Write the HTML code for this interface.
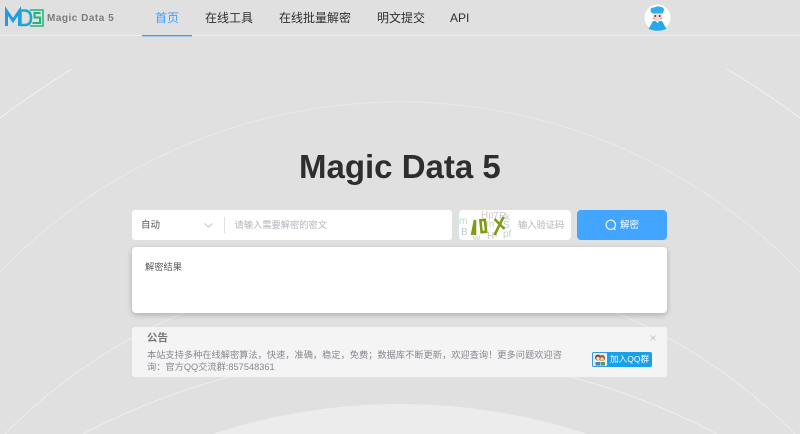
<!DOCTYPE html>
<html lang="zh">
<head>
<meta charset="utf-8">
<title>Magic Data 5</title>
<style>
html,body{margin:0;padding:0;width:800px;height:434px;overflow:hidden}
body{background:#e0e0e0;position:relative;font-family:"Liberation Sans","Noto Sans CJK SC",sans-serif}
#w{position:absolute;left:0;top:0;width:800px;height:434px;overflow:hidden;filter:blur(.3px)}
.a{position:absolute;white-space:nowrap}
.box{position:absolute;background:#fff;border-radius:4px}
.nav{top:10px;font-size:12px;line-height:16px;color:#2f2f2f}
</style>
</head>
<body>
<div id="w">
<svg class="a" style="left:0;top:0" width="800" height="434" viewBox="0 0 800 434">
<path d="M212 434A604 604 0 0 1 588 434Z" fill="#ececec"/>
<g fill="none" stroke-width="1">
<path d="M0 272A555.500 555.500 0 0 1 800 272" stroke="#e9e9e9"/>
<path d="M5 434A555 555 0 0 1 795 434" stroke="#ececec"/>
<path d="M83 434A677 677 0 0 1 717 434" stroke="#eeeeee"/>
<path d="M0 118Q35 92 72 69M800 118Q765 92 727 69" stroke="#f3f3f3"/>
</g>
<path d="M0 35.500H800" stroke="#ececec" stroke-width="1"/>
<rect x="142" y="35" width="50" height="1.400" fill="#409eff"/>
<g fill="none" stroke-linejoin="miter">
<path d="M6.500 26V11L13 20.500L19.500 11V26" stroke="#1e9de0" stroke-width="3"/>
<path d="M20.500 10.500H25Q31 11 31 18Q31 25 25 25H20.500V10.500" stroke="#1fa9c8" stroke-width="2.600"/>
<path d="M30 10H43V26H30" stroke="#1fb67c" stroke-width="1.500"/>
<path d="M40.500 13H34.500V17.500H40V23H32.500" stroke="#1fb67c" stroke-width="2"/>
</g>
</svg>
<div class="a" style="left:47px;top:11.500px;font-size:10px;line-height:13px;font-weight:700;color:#7c7c7c;letter-spacing:.5px">Magic Data 5</div>
<div class="a nav" style="left:155px;color:#409eff">首页</div>
<div class="a nav" style="left:205px">在线工具</div>
<div class="a nav" style="left:279px">在线批量解密</div>
<div class="a nav" style="left:377px">明文提交</div>
<div class="a nav" style="left:450px">API</div>

<svg class="a" style="left:644px;top:4px" width="27" height="27" viewBox="0 0 27 27">
<circle cx="13.500" cy="13.500" r="13" fill="#fff"/>
<path d="M4.500 25L9 17H18L22.500 25Q13.500 28.500 4.500 25Z" fill="#27a8ea"/>
<path d="M11.500 17L13.500 19L15.500 17Z" fill="#fff"/>
<circle cx="13.500" cy="12.500" r="4.800" fill="#fbdcd4"/>
<path d="M6.500 6.500Q6.500 3 10 3.500Q14 1.500 17 3Q20 3 20 6.500L18.500 9.500H8.500Q6.500 8 6.500 6.500Z" fill="#2fb0ec"/>
<circle cx="11.300" cy="12" r="1" fill="#5a2a20"/><circle cx="15.700" cy="12" r="1" fill="#5a2a20"/>
<circle cx="10" cy="14.500" r="1" fill="#f09c92"/><circle cx="17" cy="14.500" r="1" fill="#f09c92"/>
</svg>

<div class="a" style="left:299px;top:147px;font-size:33px;line-height:40px;font-weight:700;color:#2e2e2e">Magic Data 5</div>

<div class="box" style="left:132px;top:210px;width:320px;height:30px;border-radius:3px"></div>
<div class="a" style="left:141px;top:219px;font-size:9.500px;line-height:13px;color:#555">自动</div>
<svg class="a" style="left:203px;top:222px" width="11" height="7" viewBox="0 0 11 7"><path d="M1.500 1.500L5.500 5L9.500 1.500" fill="none" stroke="#c0c4cc" stroke-width="1"/></svg>
<div class="a" style="left:224px;top:217px;width:1px;height:16px;background:#e0e0e0"></div>
<div class="a" style="left:234.500px;top:219px;font-size:9.250px;line-height:13px;color:#b0b3ba">请输入需要解密的密文</div>

<div class="box" style="left:459px;top:210px;width:112px;height:30px;border-radius:4px"></div>
<svg class="a" style="left:459px;top:210px" width="56" height="30" viewBox="0 0 56 30">
<g font-family="Liberation Sans" font-size="10" opacity=".75">
<text x="0" y="14" fill="#9fd0a8">m</text><text x="2" y="25" fill="#9fb9d0">B</text>
<text x="22" y="8" fill="#c9b9a8">Hp</text><text x="34" y="9" fill="#b9a8d0">7</text><text x="40" y="9" fill="#b8b8b8">R</text>
<text x="27" y="17" fill="#a9c9a8">m</text><text x="28" y="29" fill="#b0b0b0">H</text><text x="36" y="27" fill="#c0c0a0">f</text>
<text x="44" y="18" fill="#9fb9d0">S</text><text x="44" y="27" fill="#a8c8a0">pf</text>
<text x="14" y="31" fill="#a8c8a0">w</text><text x="46" y="10" fill="#c0c0c0">k</text>
</g>
<g fill="none" stroke="#7f9b12" stroke-width="2.600">
<path d="M13 25L16 10V25"/>
<rect x="22" y="10" width="4.500" height="12" transform="rotate(-6 24 16)"/>
<path d="M45 7L36 25M36 9L46 19" transform="translate(-.5 0)"/>
</g>
</svg>
<div class="a" style="left:518px;top:219px;font-size:9.250px;line-height:13px;color:#b0b3ba">输入验证码</div>

<div class="a" style="left:577px;top:210px;width:90px;height:30px;background:#42a5ff;border-radius:4px"></div>
<svg class="a" style="left:604px;top:218px" width="14" height="14" viewBox="0 0 14 14"><circle cx="6.800" cy="6.800" r="4.700" fill="none" stroke="#fff" stroke-width="1.100"/><path d="M10 10.300L11.500 11.800" stroke="#fff" stroke-width="1.100"/></svg>
<div class="a" style="left:620px;top:219px;font-size:9.500px;line-height:13px;color:#fff">解密</div>

<div class="box" style="left:132px;top:247px;width:535px;height:66px;box-shadow:0 2px 6px rgba(0,0,0,.22)"></div>
<div class="a" style="left:145px;top:261px;font-size:9.250px;line-height:13px;color:#555">解密结果</div>

<div class="a" style="left:132px;top:327px;width:535px;height:50px;background:#f4f4f5;border-radius:3px"></div>
<div class="a" style="left:147px;top:331px;font-size:10.500px;line-height:14px;font-weight:700;color:#777">公告</div>
<div class="a" style="left:147px;top:348.500px;font-size:9.220px;line-height:12.500px;color:#85888e">本站支持多种在线解密算法，快速，准确，稳定，免费；数据库不断更新，欢迎查询！更多问题欢迎咨<br>询：官方QQ交流群:857548361</div>
<svg class="a" style="left:649px;top:334px" width="8" height="8" viewBox="0 0 8 8"><path d="M1.500 1.500L6.500 6.500M6.500 1.500L1.500 6.500" stroke="#c8cbd1" stroke-width="1"/></svg>

<div class="a" style="left:592px;top:352px;width:60px;height:15px;background:#18a0ea;border-radius:2px"></div>
<svg class="a" style="left:592px;top:352px" width="16" height="15" viewBox="0 0 16 15">
<rect x=".5" y=".5" width="15" height="14" rx="1.500" fill="#e6eef6" stroke="#3a9ae0"/>
<circle cx="6" cy="5.500" r="3" fill="#8a4a30"/><circle cx="10" cy="6" r="3" fill="#a3532e"/>
<circle cx="6" cy="6.500" r="1.700" fill="#f6d5c0"/><circle cx="10" cy="7" r="1.700" fill="#f6d5c0"/>
<rect x="3.500" y="10" width="4.500" height="3.500" fill="#4f7fa8"/><rect x="8.500" y="10" width="4.500" height="3.500" fill="#4f9a6a"/>
</svg>
<div class="a" style="left:610px;top:352px;color:#fff;font-size:8.500px;line-height:15px;letter-spacing:.1px">加入QQ群</div>
</div>
</body>
</html>
